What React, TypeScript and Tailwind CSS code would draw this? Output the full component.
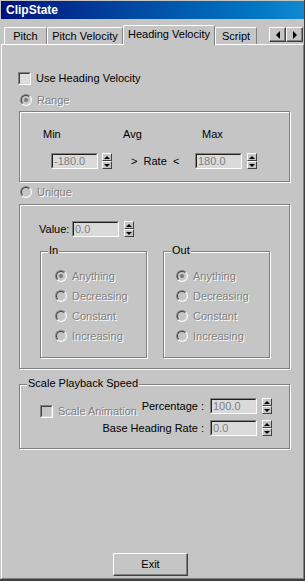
import React from "react";

const dis = "text-[#808080] [text-shadow:1px_1px_0_#fff]";

function Radio({ checked }: { checked?: boolean }) {
  return (
    <span className="relative inline-flex items-center justify-center w-[12px] h-[12px] shrink-0 rounded-full border border-t-[#808080] border-l-[#808080] border-b-white border-r-white bg-[#c5c5c5]">
      <span className="absolute inset-0 rounded-full border border-t-[#404040] border-l-[#404040] border-b-[#d8d8d8] border-r-[#d8d8d8]" />
      {checked && <span className="relative w-[4px] h-[4px] rounded-full bg-[#7a7a7a]" />}
    </span>
  );
}

function Check({ disabled }: { disabled?: boolean }) {
  return (
    <span className="inline-block w-[13px] h-[13px] shrink-0 border border-t-[#808080] border-l-[#808080] border-b-white border-r-white">
      <span
        className={
          disabled
            ? "block w-full h-full border border-t-[#404040] border-l-[#404040] border-b-[#d8d8d8] border-r-[#d8d8d8] bg-[#c5c5c5]"
            : "block w-full h-full border border-t-[#404040] border-l-[#404040] border-b-[#d8d8d8] border-r-[#d8d8d8] bg-[#dedede]"
        }
      />
    </span>
  );
}

function Edit({ value }: { value: string }) {
  return (
    <div className="w-[47px] h-[16px] shrink-0 border border-t-[#808080] border-l-[#808080] border-b-white border-r-white">
      <div className="h-full border border-t-[#202020] border-l-[#202020] border-b-[#d8d8d8] border-r-[#d8d8d8] bg-[#dadada] text-[#808080] text-[11px] leading-[12px] pl-[1px] overflow-hidden whitespace-nowrap">
        {value}
      </div>
    </div>
  );
}

function Spin() {
  return (
    <div className="flex flex-col w-[10px] h-[16px] shrink-0">
      <div className="flex-1 flex items-center justify-center border border-t-white border-l-white border-b-[#404040] border-r-[#404040] bg-[#c5c5c5]">
        <span className="w-0 h-0 border-x-[3px] border-x-transparent border-b-[3px] border-b-black" />
      </div>
      <div className="flex-1 flex items-center justify-center border border-t-white border-l-white border-b-[#404040] border-r-[#404040] bg-[#c5c5c5]">
        <span className="w-0 h-0 border-x-[3px] border-x-transparent border-t-[3px] border-t-black" />
      </div>
    </div>
  );
}

function RadioRow({ label, checked }: { label: string; checked?: boolean }) {
  return (
    <div className="flex items-center h-[20px] gap-[5px]">
      <Radio checked={checked} />
      <span className={dis}>{label}</span>
    </div>
  );
}

export default function App() {
  return (
    <div className="w-[305px] h-[581px] flex flex-col bg-[#c5c5c5] pt-[1px] pl-[1px] border-r border-r-[#404040] border-b-2 border-b-[#404040] [font-family:Liberation_Sans,Arial,sans-serif] text-[11px] leading-[13px] text-black select-none overflow-hidden">
      {/* Title bar */}
      <div className="h-[18px] shrink-0 flex items-center pl-[5px] bg-linear-to-r from-[#00107c] to-[#1288d2]">
        <span className="text-white font-bold text-[12px] leading-[14px]">ClipState</span>
      </div>

      {/* Tabs */}
      <div className="h-[25px] shrink-0 flex items-end pl-[3px] relative z-10">
        <div className="w-[43px] h-[17px] flex items-center justify-center border-t border-l border-t-white border-l-white border-r border-r-[#808080] rounded-t-[2px]">
          Pitch
        </div>
        <div className="w-[76px] h-[17px] flex items-center justify-center border-t border-l border-t-white border-l-white border-r border-r-[#808080] rounded-t-[2px]">
          Pitch Velocity
        </div>
        <div className="w-[92px] h-[20px] -mb-[1px] pb-[2px] flex items-center justify-center border-t border-l border-t-white border-l-white border-r border-r-[#808080] rounded-t-[2px] bg-[#c5c5c5]">
          Heading Velocity
        </div>
        <div className="w-[42px] h-[17px] flex items-center justify-center border-t border-l border-t-white border-l-white border-r border-r-[#808080] rounded-t-[2px]">
          Script
        </div>
        <div className="ml-auto mr-[1px] mb-[2px] flex">
          <div className="w-[17px] h-[15px] flex items-center justify-center border border-t-white border-l-white border-b-[#404040] border-r-[#404040] shadow-[inset_-1px_-1px_0_#808080]">
            <span className="w-0 h-0 border-y-[4px] border-y-transparent border-r-[4px] border-r-black" />
          </div>
          <div className="w-[17px] h-[15px] flex items-center justify-center border border-t-white border-l-white border-b-[#404040] border-r-[#404040] shadow-[inset_-1px_-1px_0_#808080]">
            <span className="w-0 h-0 border-y-[4px] border-y-transparent border-l-[4px] border-l-black" />
          </div>
        </div>
      </div>

      {/* Panel */}
      <div className="flex-1 flex flex-col border-t border-l border-t-white border-l-white border-r border-r-[#808080] border-b border-b-[#808080]">
        <div className="mt-[27px] ml-[16px] flex items-center gap-[5px] h-[13px]">
          <Check />
          <span>Use Heading Velocity</span>
        </div>

        <div className="mt-[9px] ml-[18px] flex items-center gap-[5px] h-[12px]">
          <Radio checked />
          <span className={dis}>Range</span>
        </div>

        {/* Range group */}
        <div className="mt-[5px] ml-[17px] w-[271px] h-[71px] shrink-0 border border-[#808080] shadow-[1px_1px_0_#fff,inset_1px_1px_0_#fff] flex flex-col">
          <div className="mt-[16px] pl-[23px] flex h-[13px]">
            <span className="w-[80px]">Min</span>
            <span className="w-[79px]">Avg</span>
            <span>Max</span>
          </div>
          <div className="mt-[12px] pl-[31px] flex items-center h-[16px]">
            <Edit value="-180.0" />
            <div className="ml-[4px]">
              <Spin />
            </div>
            <span className="ml-[19px] w-[47px] whitespace-pre">{">  Rate  <"}</span>
            <div className="ml-[17px]">
              <Edit value="180.0" />
            </div>
            <div className="ml-[5px]">
              <Spin />
            </div>
          </div>
        </div>

        <div className="mt-[4px] ml-[18px] flex items-center gap-[5px] h-[12px]">
          <Radio />
          <span className={dis}>Unique</span>
        </div>

        {/* Unique group */}
        <div className="mt-[6px] ml-[17px] w-[271px] h-[165px] shrink-0 border border-[#808080] shadow-[1px_1px_0_#fff,inset_1px_1px_0_#fff] flex flex-col">
          <div className="mt-[16px] pl-[19px] flex items-center h-[16px]">
            <span className="w-[33px]">Value:</span>
            <Edit value="0.0" />
            <div className="ml-[5px]">
              <Spin />
            </div>
          </div>
          <div className="mt-[14px] pl-[20px] flex gap-[16px]">
            <div className="relative w-[107px] h-[107px] border border-[#808080] shadow-[1px_1px_0_#fff,inset_1px_1px_0_#fff] pt-[14px] pl-[14px]">
              <span className="absolute -top-[8px] left-[7px] px-[1px] bg-[#c5c5c5]">In</span>
              <RadioRow label="Anything" checked />
              <RadioRow label="Decreasing" />
              <RadioRow label="Constant" />
              <RadioRow label="Increasing" />
            </div>
            <div className="relative w-[107px] h-[107px] border border-[#808080] shadow-[1px_1px_0_#fff,inset_1px_1px_0_#fff] pt-[14px] pl-[12px]">
              <span className="absolute -top-[8px] left-[7px] px-[1px] bg-[#c5c5c5]">Out</span>
              <RadioRow label="Anything" checked />
              <RadioRow label="Decreasing" />
              <RadioRow label="Constant" />
              <RadioRow label="Increasing" />
            </div>
          </div>
        </div>

        {/* Scale Playback Speed group */}
        <div className="relative mt-[15px] ml-[17px] w-[271px] h-[65px] shrink-0 border border-[#808080] shadow-[1px_1px_0_#fff,inset_1px_1px_0_#fff] flex pt-[13px] pr-[17px]">
          <span className="absolute -top-[8px] left-[7px] px-[1px] bg-[#c5c5c5]">Scale Playback Speed</span>
          <div className="ml-[20px] mt-[7px] w-0 shrink-0 flex items-center gap-[5px] h-[13px] self-start whitespace-nowrap">
            <Check disabled />
            <span className={dis}>Scale Animation</span>
          </div>
          <div className="flex-1 flex flex-col items-end gap-[6px]">
            <div className="flex items-center h-[16px]">
              <span className="mr-[6px] whitespace-nowrap">Percentage :</span>
              <Edit value="100.0" />
              <div className="ml-[5px]">
                <Spin />
              </div>
            </div>
            <div className="flex items-center h-[16px]">
              <span className="mr-[6px] whitespace-nowrap">Base Heading Rate :</span>
              <Edit value="0.0" />
              <div className="ml-[5px]">
                <Spin />
              </div>
            </div>
          </div>
        </div>

        <div className="mt-auto mb-[2px] ml-[111px] w-[75px] h-[23px] flex items-center justify-center border border-t-white border-l-white border-b-[#404040] border-r-[#404040] shadow-[inset_-1px_-1px_0_#808080]">
          Exit
        </div>
      </div>
    </div>
  );
}
